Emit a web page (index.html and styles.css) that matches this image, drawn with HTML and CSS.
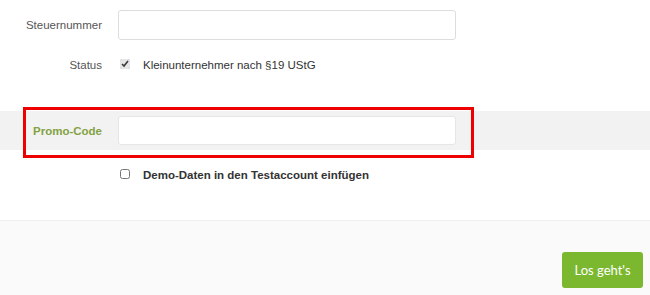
FILE: index.html
```html
<!DOCTYPE html>
<html lang="de">
<head>
<meta charset="UTF-8">
<title>Registrierung</title>
<link rel="stylesheet" href="styles.css">
</head>
<body>

<form class="signup">
    <div class="form-row">
        <label class="form-label" for="taxNumber">Steuernummer</label>
        <input class="form-input" id="taxNumber" type="text">
    </div>

    <div class="form-row form-row-check">
        <span class="form-label">Status</span>
        <label class="check">
            <input type="checkbox" checked>
            <span>Kleinunternehmer nach §19 UStG</span>
        </label>
    </div>

    <div class="form-row promo">
        <label class="form-label promo-label" for="promoCode">Promo-Code</label>
        <input class="form-input" id="promoCode" type="text">
        <div class="highlight"></div>
    </div>

    <div class="form-row form-row-check demo">
        <span></span>
        <label class="check check-bold">
            <input type="checkbox">
            <span>Demo-Daten in den Testaccount einfügen</span>
        </label>
    </div>

    <div class="form-footer">
        <button type="submit" class="btn-go">Los geht's</button>
    </div>
</form>

</body>
</html>
```

FILE: styles.css
```css
body {
    margin: 0;
    font-family: 'Liberation Sans', Arial, sans-serif;
    font-size: 11.5px;
    color: #333;
    background: #fff;
}

.signup {
    padding-top: 10px;
}

.form-row {
    display: grid;
    grid-template-columns: 118px 338px;
    align-items: center;
    height: 30px;
}

.form-label {
    text-align: right;
    padding-right: 16px;
    color: #555;
}

.form-input {
    box-sizing: border-box;
    height: 30px;
    margin: 0;
    border: 1px solid #ddd;
    border-radius: 3px;
    background: #fff;
}

.form-row-check {
    height: 20px;
    margin-top: 15px;
}

.check {
    display: flex;
    align-items: center;
    gap: 13px;
    padding-left: 2px;
}

.check input {
    width: 10px;
    height: 10px;
    margin: 0 0 2px;
    accent-color: #e6e6e6;
}

.check-bold {
    font-weight: bold;
}

.promo {
    position: relative;
    margin-top: 36px;
    height: 39px;
    background: #f2f2f2;
}

.promo .form-input {
    height: 29px;
    border-color: #e6e6e6;
}

.promo-label {
    font-weight: bold;
    color: #82a243;
}

/* red annotation frame round the promo row */
.highlight {
    position: absolute;
    top: -4px;
    left: 23px;
    width: 451px;
    height: 51px;
    box-sizing: border-box;
    border: 3px solid #ec0000;
    pointer-events: none;
}

.demo {
    margin-top: 15px;
}

.form-footer {
    margin-top: 35px;
    border-top: 1px solid #f0f0f0;
    background: #fafafa;
    height: 75px;
    display: flex;
    justify-content: flex-end;
    align-items: flex-start;
    padding: 31px 7px 0 0;
    box-sizing: border-box;
}

.btn-go {
    width: 81px;
    height: 36px;
    border: none;
    border-radius: 3px;
    background: #7cb82f;
    color: #fff;
    font-family: Lato, sans-serif;
    font-size: 13px;
}
```
